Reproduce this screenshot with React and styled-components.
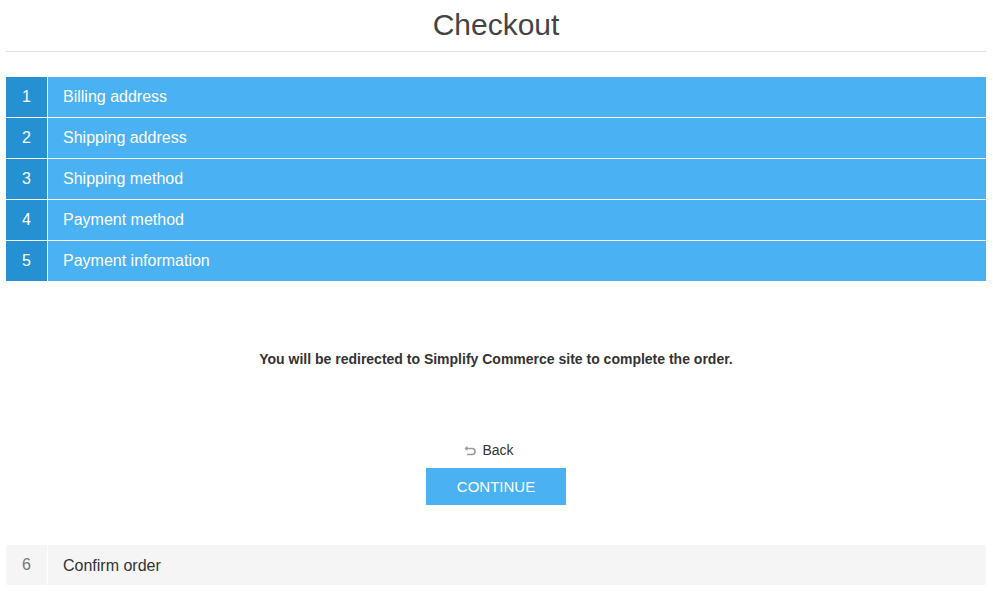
import React from "react";
import styled, { createGlobalStyle } from "styled-components";

const steps = [
  "Billing address",
  "Shipping address",
  "Shipping method",
  "Payment method",
  "Payment information",
];

const GlobalStyle = createGlobalStyle`
  body {
    margin: 0;
    background: #fff;
    font-family: "Liberation Sans", Arial, sans-serif;
    color: #333;
  }
`;

const Page = styled.div`
  padding: 0 7px 0 6px;
`;

const Title = styled.h1`
  margin: 0 0 25px;
  padding: 5px 0 6px;
  line-height: 40px;
  font-size: 30px;
  font-weight: normal;
  color: #444;
  text-align: center;
  border-bottom: 1px solid #ddd;
`;

const Steps = styled.ul`
  list-style: none;
  margin: 0;
  padding: 0;
`;

const Step = styled.li`
  display: flex;
  height: 40px;
  margin-bottom: 1px;
  background: ${({ active }) => (active ? "#4ab1f2" : "#f5f5f5")};
  color: ${({ active }) => (active ? "#fff" : "#333")};
  font-size: 16px;
`;

const Number = styled.span`
  display: flex;
  align-items: center;
  justify-content: center;
  width: 41px;
  border-right: 1px solid #fff;
  background: ${({ active }) => (active ? "#2590d2" : "#f5f5f5")};
  color: ${({ active }) => (active ? "#fff" : "#777")};
`;

const Label = styled.span`
  display: flex;
  align-items: center;
  padding-left: 15px;
  padding-top: ${({ active }) => (active ? "0" : "1px")};
`;

const Section = styled.div`
  display: flex;
  flex-direction: column;
  align-items: center;
  padding: 67px 0 40px;
`;

const Message = styled.p`
  margin: 0 0 71px;
  line-height: 20px;
  font-size: 14px;
  font-weight: bold;
  color: #333;
`;

const BackLink = styled.a`
  display: flex;
  align-items: center;
  gap: 6px;
  padding-right: 14px;
  line-height: 20px;
  font-size: 14px;
  color: #333;
  text-decoration: none;
  cursor: pointer;

  svg {
    margin-top: 1px;
  }
`;

const ContinueButton = styled.button`
  margin-top: 8px;
  width: 140px;
  height: 37px;
  border: 0;
  background: #4ab1f2;
  color: #fff;
  font-family: inherit;
  font-size: 15px;
  text-transform: uppercase;
  cursor: pointer;
`;

const BackIcon = () => (
  <svg width="12" height="10" viewBox="0 0 12 10" fill="none">
    <path d="M1.5 2.5H8a3 3 0 0 1 0 6H3" stroke="#999" strokeWidth="1.6" />
    <path d="M0.5 2.5L3.5 0v5z" fill="#999" />
  </svg>
);

export default function App() {
  return (
    <Page>
      <GlobalStyle />
      <Title>Checkout</Title>
      <Steps>
        {steps.map((name, i) => (
          <Step key={name} active>
            <Number active>{i + 1}</Number>
            <Label active>{name}</Label>
          </Step>
        ))}
      </Steps>
      <Section>
        <Message>
          You will be redirected to Simplify Commerce site to complete the order.
        </Message>
        <BackLink>
          <BackIcon />
          Back
        </BackLink>
        <ContinueButton>Continue</ContinueButton>
      </Section>
      <Step>
        <Number>6</Number>
        <Label>Confirm order</Label>
      </Step>
    </Page>
  );
}
